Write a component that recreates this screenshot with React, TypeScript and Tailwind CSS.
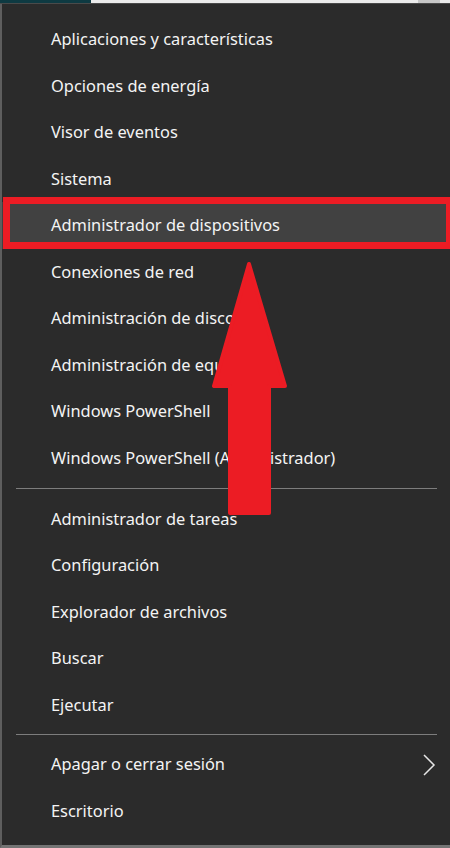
import React from "react";

const section1 = [
  "Aplicaciones y características",
  "Opciones de energía",
  "Visor de eventos",
  "Sistema",
  "Administrador de dispositivos",
  "Conexiones de red",
  "Administración de discos",
  "Administración de equipos",
  "Windows PowerShell",
  "Windows PowerShell (Administrador)",
];
const section2 = [
  "Administrador de tareas",
  "Configuración",
  "Explorador de archivos",
  "Buscar",
  "Ejecutar",
];

function Row({ label, active, chevron }: { label: string; active?: boolean; chevron?: boolean }) {
  return (
    <div
      className={`h-[46.5px] flex items-center justify-between pl-[49px] pr-[14px] pt-[1px] text-[16.4px] text-[#f4f4f4] ${
        active ? "bg-[#414141]" : ""
      }`}
    >
      <span className="whitespace-nowrap">{label}</span>
      {chevron && (
        <svg width="14" height="22" viewBox="0 0 14 22">
          <polyline points="2,1 12,11 2,21" fill="none" stroke="#e6e6e6" strokeWidth="1.5" />
        </svg>
      )}
    </div>
  );
}

function Separator({ top, bottom }: { top: string; bottom: string }) {
  return (
    <div className={`${top} ${bottom} pl-[14px] pr-[13px]`}>
      <div className="h-px bg-[#7d7d7d]" />
    </div>
  );
}

export default function App() {
  return (
    <div
      className="relative w-[450px] h-[848px] overflow-hidden bg-[#2b2b2b] flex flex-col"
      style={{ fontFamily: '"Noto Sans", "Open Sans", sans-serif' }}
    >
      <div className="flex h-[3px] shrink-0">
        <div className="w-[91px] bg-[#0e3a42]" />
        <div className="flex-1 bg-[#ebebeb]" />
        <div className="w-[22px] bg-[#c6c6c6]" />
        <div className="w-[10px] bg-[#ebebeb]" />
      </div>
      <div className="h-px shrink-0 bg-[#4a4a4a]" />
      <div className="flex-1 border-l-2 border-l-[#5e5e5e] border-b-[3px] border-b-[#747474] pt-[12px]">
        {section1.map((l) => (
          <Row key={l} label={l} active={l === "Administrador de dispositivos"} />
        ))}
        <Separator top="pt-[7px]" bottom="pb-[6.5px]" />
        {section2.map((l) => (
          <Row key={l} label={l} />
        ))}
        <Separator top="pt-[6px]" bottom="pb-[6px]" />
        <Row label="Apagar o cerrar sesión" chevron />
        <Row label="Escritorio" />
      </div>

      <div className="absolute left-[3px] top-[197px] w-[450px] h-[52px] border-[7px] border-[#ec1c24]" />

      <svg className="absolute left-0 top-0" width="450" height="848" viewBox="0 0 450 848">
        <path
          d="M249 264 L214 386 L230 386 L230 513 L269 513 L269 386 L285 386 Z"
          fill="#ec1c24"
          stroke="#ec1c24"
          strokeWidth="4"
          strokeLinejoin="round"
        />
      </svg>
    </div>
  );
}
